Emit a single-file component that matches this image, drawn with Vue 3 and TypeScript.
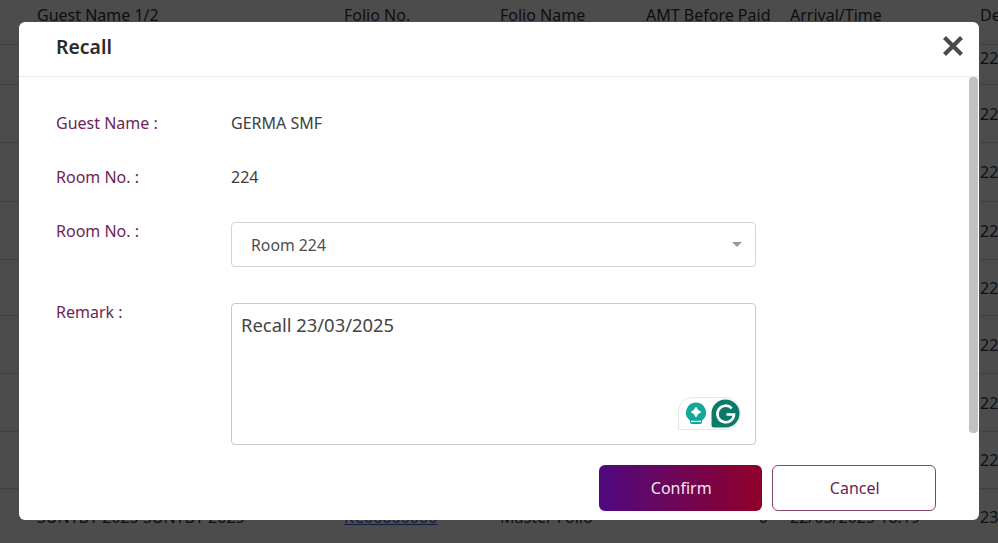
<script setup lang="ts">
interface Row { name: string; no: string; folio: string; amt: string; time: string; dep: string; h: number }
const heights = [40, 58, 59, 58, 56, 58, 58, 57]
const rows: Row[] = heights.map((h) => ({ name: 'GERMA SMF', no: 'RC00000224', folio: 'Master Folio', amt: '0', time: '22/03/2025 18:19', dep: '22', h }))
rows.push({ name: 'SUNTBY 2025 SUNTBY 2025', no: 'RC00000000', folio: 'Master Folio', amt: '0', time: '22/03/2025 18:19', dep: '23', h: 56 })
const fields = [
  { label: 'Guest Name :', value: 'GERMA SMF' },
  { label: 'Room No. :', value: '224' },
]
</script>

<template>
  <div class="page">
    <div class="table">
      <div class="row head">
        <span class="c0"></span>
        <span class="c1">Guest Name 1/2</span>
        <span class="c2">Folio No.</span>
        <span class="c3">Folio Name</span>
        <span class="c4">AMT Before Paid</span>
        <span class="c5">Arrival/Time</span>
        <span class="c6">De</span>
      </div>
      <div v-for="(r, i) in rows" :key="i" class="row" :style="{ height: r.h + 'px' }">
        <span class="c0"></span>
        <span class="c1">{{ r.name }}</span>
        <span class="c2 link">{{ r.no }}</span>
        <span class="c3">{{ r.folio }}</span>
        <span class="c4 num">{{ r.amt }}</span>
        <span class="c5">{{ r.time }}</span>
        <span class="c6">{{ r.dep }}</span>
      </div>
    </div>

    <div class="backdrop"></div>

    <section class="dialog">
      <header class="dialog-head">
        <h2>Recall</h2>
        <button class="close" type="button" aria-label="Close">
          <svg width="24" height="24" viewBox="0 0 24 24">
            <path d="M3.5 3.5 20.5 20.5M20.5 3.5 3.5 20.5" fill="none" stroke="#4a4a4a" stroke-width="4.2" />
          </svg>
        </button>
      </header>

      <div class="dialog-body">
        <div class="form">
          <div v-for="f in fields" :key="f.label" class="info">
            <span class="label">{{ f.label }}</span>
            <span class="value">{{ f.value }}</span>
          </div>

          <div class="field select-field">
            <span class="label">Room No. :</span>
            <div class="select">
              <span>Room 224</span>
              <i class="caret"></i>
            </div>
          </div>

          <div class="field remark-field">
            <span class="label">Remark :</span>
            <div class="remark">
              <textarea readonly>Recall 23/03/2025</textarea>
              <div class="grammarly">
                <svg width="22" height="24" viewBox="0 0 22 24">
                  <path d="M11 0.500a10 10 0 0 1 6 18v1.500a2 2 0 0 1-2 2h-8a2 2 0 0 1-2-2v-1.500a10 10 0 0 1 6-18z" fill="#15a89a" />
                  <path d="M11 5.500c.8 2.500 1.700 3.400 4.500 4.500-2.800 1.100-3.700 2-4.500 4.500-.8-2.500-1.700-3.400-4.500-4.500 2.800-1.100 3.700-2 4.500-4.500z" fill="#fff" stroke="#fff" stroke-width="1.200" stroke-linejoin="round" />
                  <rect x="6" y="18.800" width="10" height="1.200" fill="#fff" />
                </svg>
                <svg class="g" width="29" height="29" viewBox="0 0 29 29">
                  <path d="M14.500 .5a14 14 0 1 1 0 28H3a2.500 2.500 0 0 1-2.500-2.500V14.500A14 14 0 0 1 14.500 .5z" fill="#0b7a68" />
                  <path d="M20.800 9.300A8.300 8.300 0 1 0 23 15.500H15.500" fill="none" stroke="#fff" stroke-width="2.600" />
                </svg>
              </div>
            </div>
          </div>
        </div>

        <div class="actions">
          <button class="btn primary" type="button">Confirm</button>
          <button class="btn ghost" type="button">Cancel</button>
        </div>
        <div class="scrollbar"></div>
      </div>
    </section>
  </div>
</template>

<style>
html, body { margin: 0; background: #4d4d4d; overflow: hidden; }
</style>

<style scoped>
.page {
  position: relative;
  width: 998px;
  height: 543px;
  overflow: hidden;
  background: #fff;
  font-family: "Noto Sans", "Open Sans", sans-serif;
  color: #222;
}
.table { display: flex; flex-direction: column; width: 998px; }
.row {
  display: grid;
  grid-template-columns: 37px 307px 156px 146px 144px 190px 18px;
  align-items: center;
  box-sizing: border-box;
  border-bottom: 1px solid #d8d8d8;
  font-size: 16px;
  color: #333;
  white-space: nowrap;
}
.head { height: 45px; padding-bottom: 15px; }
.row:nth-child(2) { padding-bottom: 14px; }
.link { color: #2f5fd0; text-decoration: underline; }
.num { text-align: right; padding-right: 22px; }
.backdrop { position: absolute; inset: 0; background: rgba(0, 0, 0, 0.7); }
.dialog {
  position: absolute;
  left: 19px;
  top: 22px;
  width: 960px;
  height: 498px;
  background: #fff;
  border-radius: 6px;
  display: flex;
  flex-direction: column;
  overflow: hidden;
}
.dialog-head {
  height: 55px;
  flex: none;
  box-sizing: border-box;
  border-bottom: 1px solid #e9e9e9;
  display: flex;
  align-items: center;
  justify-content: space-between;
  padding: 0 14px 6px 37px;
}
h2 { margin: 0; font-size: 19.4px; font-weight: 600; color: #2b2b2b; }
.close { border: 0; background: none; padding: 0; width: 24px; height: 24px; }
.dialog-body { position: relative; flex: 1; padding: 0 43px 0 37px; }
.form { display: flex; flex-direction: column; }
.label { width: 175px; flex: none; font-size: 16px; line-height: 18px; color: #6e2458; }
.value { font-size: 16px; line-height: 18px; color: #3d3d3d; }
.info { display: flex; align-items: center; height: 20px; margin-top: 36px; }
.info + .info { margin-top: 34px; }
.field { display: flex; }
.select-field { margin-top: 35px; }
.select {
  width: 525px;
  height: 45px;
  box-sizing: border-box;
  border: 1px solid #d4d4d4;
  border-radius: 4px;
  padding: 0 13px 0 19px;
  display: flex;
  align-items: center;
  justify-content: space-between;
  font-size: 15.8px;
  color: #4d4d4d;
}
.caret { width: 0; height: 0; border: 5px solid transparent; border-top: 5px solid #999; border-bottom: 0; }
.remark-field { margin-top: 36px; }
.remark { position: relative; width: 525px; height: 142px; }
textarea {
  display: block;
  width: 100%;
  height: 100%;
  box-sizing: border-box;
  border: 1px solid #c9c9c9;
  border-radius: 4px;
  padding: 9px 9px;
  resize: none;
  outline: 0;
  font: 18.4px/24px "Noto Sans", "Open Sans", sans-serif;
  color: #444;
}
.grammarly {
  position: absolute;
  right: 15px;
  bottom: 15px;
  width: 63px;
  height: 33px;
  box-sizing: border-box;
  border: 1px solid #e2e8e6;
  border-radius: 14px 16px 16px 0;
  display: flex;
  align-items: center;
  gap: 4px;
  padding-left: 6px;
  background: #fff;
}
.actions { display: flex; gap: 10px; margin: 20px 0 0 543px; }
.btn {
  width: 165px;
  height: 46px;
  box-sizing: border-box;
  border-radius: 6px;
  padding: 0 0 0 2px;
  font: 16px "Noto Sans", "Open Sans", sans-serif;
}
.primary { width: 163px; border: 0; color: #f2e6f2; background: linear-gradient(90deg, #4f0a80, #8f0029); }
.ghost { background: #fff; border: 1px solid #80476e; color: #6e2458; }
.scrollbar {
  position: absolute;
  right: 1px;
  top: 0;
  width: 9px;
  height: 356px;
  border-radius: 4px;
  background: #c1c1c1;
}
</style>
